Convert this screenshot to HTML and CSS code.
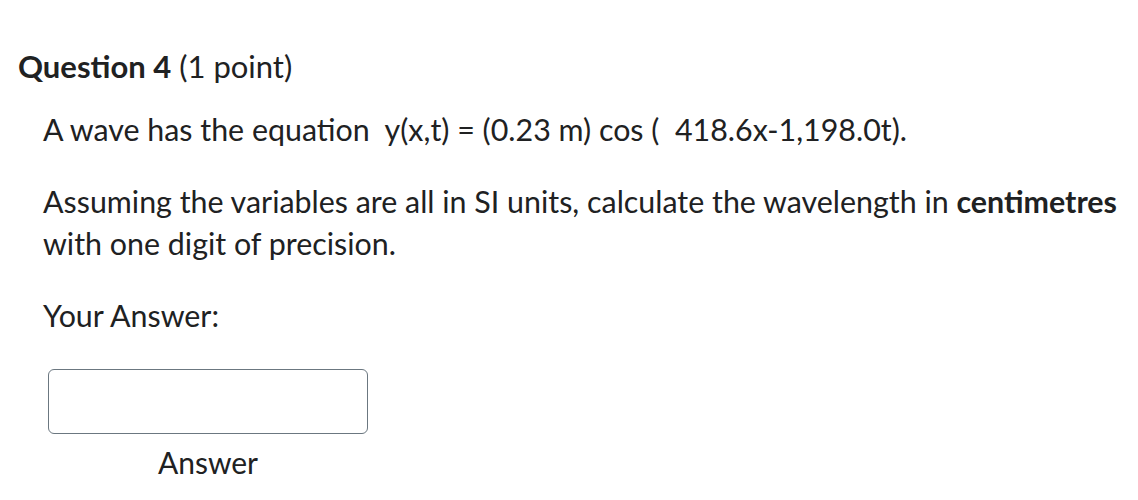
FILE: index.html
```html
<!DOCTYPE html>
<html>
<head>
<meta charset="utf-8">
<link rel="stylesheet" href="styles.css">
</head>
<body>
<div class="question">
  <h2 class="title"><strong>Question 4</strong> (1 point)</h2>
  <div class="body">
    <p class="eq">A wave has the equation&nbsp; y(x,t) = (0.23 m) cos (&nbsp; 418.6x-1,198.0t).</p>
    <p class="prompt">Assuming the variables are all in SI units, calculate the wavelength in <strong>centimetres</strong> with one digit of precision.</p>
    <p class="label">Your Answer:</p>
    <div class="answer">
      <input class="field" type="text" aria-label="Answer">
      <span class="caption">Answer</span>
    </div>
  </div>
</div>
</body>
</html>
```
FILE: styles.css
```css
html, body {
  margin: 0;
  padding: 0;
  background: #ffffff;
}
body {
  font-family: Lato, "Open Sans", sans-serif;
  color: #202122;
}
.question {
  padding: 46px 0 0 18px;
}
.title {
  margin: 0;
  font-size: 31px;
  font-weight: 400;
  line-height: 40px;
}
.title strong {
  font-weight: 700;
}
.body {
  padding-left: 25px;
  font-size: 30.4px;
  line-height: 42px;
}
.body p {
  margin: 0;
}
.eq {
  margin-top: 22px !important;
}
.prompt {
  margin-top: 30px !important;
}
.label {
  margin-top: 30px !important;
}
.answer {
  display: flex;
  flex-direction: column;
  align-items: center;
  width: 320px;
  margin: 33px 0 0 5px;
}
.field {
  box-sizing: border-box;
  width: 320px;
  height: 65px;
  border: 1px solid #6b7780;
  border-radius: 6px;
  background: #fff;
  margin: 0;
}
.caption {
  font-size: 30px;
  line-height: 42px;
  margin-top: 7px;
}
```
